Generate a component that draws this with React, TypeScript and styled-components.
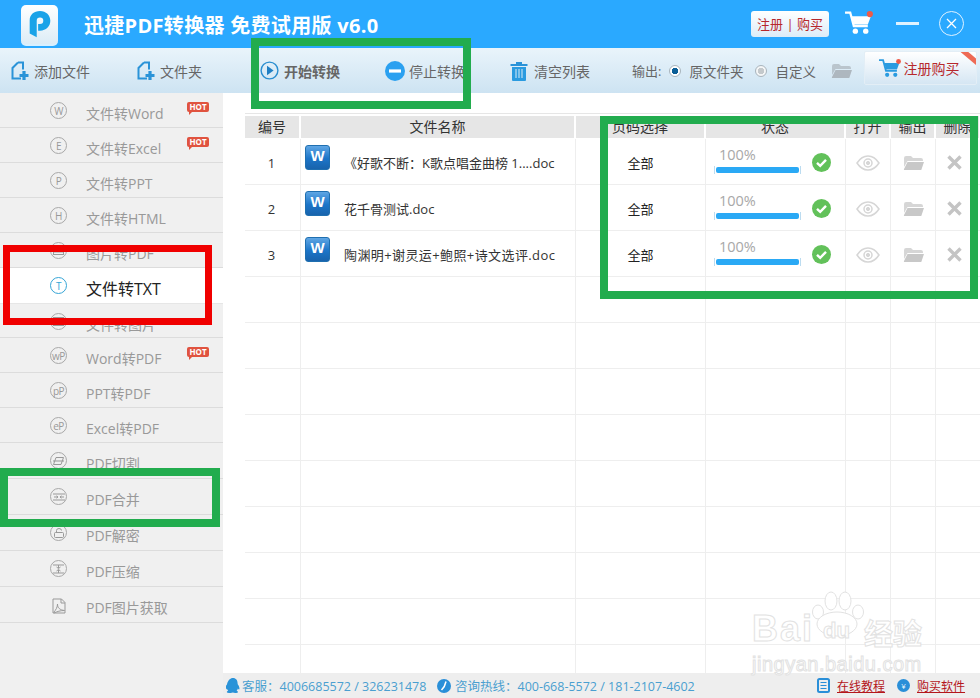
import * as React from 'react';
import styled, { createGlobalStyle } from 'styled-components';

const GlobalStyle = createGlobalStyle`
    html, body {
        margin: 0;
        padding: 0;
        background: #fff;
    }
    * {
        box-sizing: border-box;
    }
`;

const FONT = `"Open Sans", "Noto Sans CJK SC", sans-serif`;
const COLUMNS = '56px 275px 130px 140px 45px 45px 45px';

const Frame = styled.div`
    position: relative;
    width: 980px;
    height: 698px;
    overflow: hidden;
    display: flex;
    flex-direction: column;
    font-family: ${FONT};
    background: #fff;
`;

/* header */
const Header = styled.div`
    height: 48px;
    flex: none;
    background: #2aa9ff;
    display: flex;
    align-items: center;
    padding-left: 21px;
`;

const Logo = styled.div`
    width: 37px;
    height: 41px;
    margin-top: 3px;
    border-radius: 5px;
    border-bottom: 2px solid #d8f0ff;
    background: linear-gradient(#ffffff, #dcecf6);
    display: flex;
    align-items: center;
    justify-content: center;
`;

const Title = styled.div`
    margin-left: 26px;
    font-size: 20px;
    font-weight: 700;
    letter-spacing: 0.3px;
    color: #fff;
    white-space: nowrap;
    width: 667px;
`;

const RegisterLink = styled.div`
    width: 78px;
    height: 26px;
    margin-top: -1px;
    border-radius: 3px;
    background: linear-gradient(#ffffff, #dcecf8);
    color: #b7282c;
    font-size: 13px;
    display: flex;
    align-items: center;
    justify-content: center;
`;

const HeaderIcons = styled.div`
    display: flex;
    align-items: center;
    margin-top: -2px;
    margin-left: 16px;
`;

const MinLine = styled.div`
    width: 23px;
    height: 3px;
    background: #dff2ff;
    margin-left: 23px;
`;

const CloseCircle = styled.div`
    width: 25px;
    height: 25px;
    margin-left: 20px;
    border: 1.5px solid #dff2ff;
    border-radius: 50%;
    color: #fff;
    display: flex;
    align-items: center;
    justify-content: center;
`;

/* toolbar */
const Toolbar = styled.div`
    height: 45px;
    flex: none;
    padding-left: 10px;
    background: linear-gradient(#e9f4fb, #cde3f2);
    display: flex;
    align-items: center;
`;

const ToolButton = styled.div<{ $w: number; $bold?: boolean; $gap?: number }>`
    width: ${p => p.$w}px;
    flex: none;
    display: flex;
    align-items: center;
    gap: ${p => p.$gap ?? 4}px;
    font-size: 14px;
    color: #666;
    font-weight: ${p => (p.$bold ? 700 : 400)};
    white-space: nowrap;
`;

const OutputLabel = styled.span`
    font-size: 13px;
    color: #666;
    white-space: nowrap;
    margin-right: 8px;
`;

const OutputOption = styled.span<{ $w: number }>`
    width: ${p => p.$w}px;
    flex: none;
    margin-left: 8px;
    font-size: 13.5px;
    color: #666;
    white-space: nowrap;
`;

const Radio = styled.span<{ $on?: boolean }>`
    width: 12px;
    height: 12px;
    flex: none;
    border-radius: 50%;
    border: 1px solid #a9b4bc;
    background: ${p => (p.$on ? 'radial-gradient(circle, #0c5f97 0 3px, #fff 3.5px)' : 'radial-gradient(circle, #c4c9cc 0 3px, #f4f6f7 3.5px)')};
`;

const BuyButton = styled.div`
    position: relative;
    width: 113px;
    height: 34px;
    flex: none;
    margin-top: -5px;
    margin-left: 12px;
    overflow: hidden;
    border: 1px solid #e3eef6;
    border-radius: 2px;
    background: linear-gradient(#ffffff, #d5e6f3);
    color: #b7282c;
    font-size: 14px;
    display: flex;
    align-items: center;
    padding-left: 14px;
    gap: 2px;
`;

const Ribbon = styled.span`
    position: absolute;
    top: 3px;
    right: -9px;
    width: 28px;
    height: 5px;
    background: #ee6a55;
    transform: rotate(40deg);
`;

/* body */
const Body = styled.div`
    flex: 1;
    min-height: 0;
    display: flex;
`;

const Sidebar = styled.div`
    width: 223px;
    flex: none;
    background: #f0f0f0;
`;

const NavRow = styled.div<{ $h: number; $active?: boolean }>`
    position: relative;
    height: ${p => p.$h}px;
    padding-left: 50px;
    display: flex;
    align-items: flex-start;
    border-bottom: 1px solid ${p => (p.$active ? '#e6e6e6' : '#dcdcdc')};
    background: ${p => (p.$active ? '#fff' : 'transparent')};
    color: ${p => (p.$active ? '#222' : '#999')};
    font-size: ${p => (p.$active ? 16 : 14)}px;
`;

const NavIcon = styled.span<{ $active?: boolean }>`
    width: 17px;
    height: 17px;
    flex: none;
    margin-top: 9px;
    border-radius: 50%;
    border: 1px solid ${p => (p.$active ? '#36a5d6' : '#a8a8a8')};
    color: ${p => (p.$active ? '#36a5d6' : '#999')};
    font-size: 10px;
    line-height: 1;
    letter-spacing: -0.5px;
    display: flex;
    align-items: center;
    justify-content: center;
`;

const NavSquareIcon = styled.span`
    width: 17px;
    height: 17px;
    flex: none;
    margin-top: 11px;
    padding-left: 2px;
    color: #999;
    display: flex;
`;

const NavLabel = styled.span`
    margin-left: 19px;
    margin-top: 11px;
    line-height: 20px;
    white-space: nowrap;
`;

const HotBadge = styled.span`
    position: absolute;
    left: 187px;
    top: 9px;
    width: 22px;
    height: 10px;
    border-radius: 2px;
    background: #e0533f;
    color: #fff;
    font-size: 8px;
    font-weight: 700;
    line-height: 10px;
    text-align: center;
    &::after {
        content: '';
        position: absolute;
        left: 2px;
        top: 9px;
        border-top: 4px solid #e0533f;
        border-right: 4px solid transparent;
    }
`;

/* table */
const Main = styled.div`
    flex: 1;
    min-width: 0;
    display: flex;
    flex-direction: column;
`;

const TableArea = styled.div`
    flex: 1;
    min-height: 0;
    overflow: hidden;
    margin-top: 20px;
    margin-left: 22px;
    border-top: 1px solid #e6e6e6;
`;

const HeadRow = styled.div`
    height: 25px;
    padding-top: 2px;
    display: grid;
    grid-template-columns: ${COLUMNS};
`;

const HeadCell = styled.div`
    margin-right: 2px;
    height: 22px;
    background: #e6e6e6;
    color: #333;
    font-size: 14px;
    line-height: 22px;
    text-align: center;
    white-space: nowrap;
    overflow: hidden;
`;

const Row = styled.div`
    height: 46px;
    display: grid;
    grid-template-columns: ${COLUMNS};
    border-bottom: 1px solid #eeeeee;
`;

const Cell = styled.div`
    border-right: 1px solid #eeeeee;
    display: flex;
    align-items: center;
    justify-content: center;
    font-size: 13px;
    color: #333;
    min-width: 0;
`;

const NumberCell = styled(Cell)`
    padding-top: 2px;
    padding-right: 2px;
`;

const NameCell = styled(Cell)`
    justify-content: flex-start;
    padding-left: 4px;
    white-space: nowrap;
`;

const FileName = styled.span<{ $spacing?: number }>`
    margin-left: 14px;
    margin-top: 2px;
    letter-spacing: ${p => p.$spacing ?? 0}px;
    color: #333;
`;

const WordIcon = styled.span`
    width: 25px;
    height: 25px;
    flex: none;
    margin-top: -9px;
    border-radius: 3px;
    border: 1px solid #1f6fb0;
    background: linear-gradient(#5fa6e4 0, #1c75c8 55%, #1863ac);
    color: #fff;
    font-family: "Liberation Sans", sans-serif;
    font-size: 15px;
    font-weight: 700;
    line-height: 20px;
    text-align: center;
`;

const PageCell = styled(Cell)`
    padding-top: 1px;
    color: #222;
`;

const StatusCell = styled(Cell)`
    justify-content: flex-start;
    padding-left: 8px;
    padding-top: 2px;
    gap: 11px;
`;

const ProgressBox = styled.div`
    width: 87px;
    flex: none;
    margin-top: -5px;
`;

const Percent = styled.div`
    padding-left: 5px;
    font-size: 14.5px;
    line-height: 17px;
    color: #a8a8a8;
`;

const BarTrack = styled.div`
    height: 8px;
    margin-top: 3px;
    padding: 1px;
    border-left: 1px solid #bcdcf0;
    border-right: 1px solid #bcdcf0;
`;

const BarFill = styled.div`
    height: 100%;
    border-radius: 2px;
    background: #2aa9f5;
`;

const ActionCell = styled(Cell)<{ $pad?: number }>`
    padding-top: 2px;
    padding-right: ${p => p.$pad ?? 0}px;
`;

/* footer */
const Footer = styled.div`
    height: 25px;
    flex: none;
    background: #eeeeee;
    display: flex;
    align-items: center;
    padding-left: 3px;
    font-size: 12.5px;
    color: #4a9fd0;
    white-space: nowrap;
`;

const FooterText = styled.span<{ $w: number; $gap: number }>`
    width: ${p => p.$w}px;
    flex: none;
    margin-left: ${p => p.$gap}px;
`;

const FooterLink = styled.a`
    color: #b4161b;
    font-size: 12px;
    text-decoration: underline;
    margin-left: 7px;
`;

const FooterDot = styled.span`
    width: 13px;
    height: 13px;
    margin-left: 12px;
    border-radius: 50%;
    background: #2a8fd8;
    color: #fff;
    font-size: 8px;
    text-align: center;
    line-height: 13px;
`;

/* annotations drawn over the screenshot */
const Annotation = styled.div<{ $x: number; $y: number; $w: number; $h: number; $color: string; $stroke: number }>`
    position: absolute;
    left: ${p => p.$x}px;
    top: ${p => p.$y}px;
    width: ${p => p.$w}px;
    height: ${p => p.$h}px;
    border: ${p => p.$stroke}px solid ${p => p.$color};
`;

const Watermark = styled.div`
    position: absolute;
    left: 752px;
    top: 591px;
    width: 190px;
    color: #fff;
    -webkit-text-stroke: 1px #e2e2e2;
    font-family: "Liberation Sans", sans-serif;
`;

const WatermarkMain = styled.div`
    display: flex;
    align-items: flex-end;
    height: 58px;
    font-size: 36px;
    font-weight: 700;
    line-height: 40px;
    letter-spacing: 2px;
`;

const WatermarkDu = styled.span`
    position: absolute;
    left: 71px;
    top: 27px;
    font-size: 22px;
    line-height: 26px;
    letter-spacing: 0;
`;

const WatermarkCn = styled.span`
    position: absolute;
    left: 112px;
    top: 24px;
    font-family: "Noto Sans CJK SC", sans-serif;
    font-size: 29px;
    line-height: 34px;
    letter-spacing: 0;
`;

const WatermarkUrl = styled.div`
    margin-top: 4px;
    font-size: 20px;
    font-weight: 400;
    line-height: 22px;
    letter-spacing: 0.5px;
`;

const Paw = styled.svg`
    position: absolute;
    left: 60px;
    top: 0;
`;

const AddIcon = () => (
    <svg width="20" height="20" viewBox="0 0 20 20" fill="none">
        <path d="M8 1.5h5v7M11 17.5H2.5V7L8 1.5" stroke="#2a93d8" strokeWidth="2" />
        <path d="M14 10v9M9.5 14.5h9" stroke="#2a93d8" strokeWidth="3.2" />
    </svg>
);

const PlayIcon = () => (
    <svg width="19" height="19" viewBox="0 0 19 19">
        <circle cx="9.5" cy="9.5" r="8.4" fill="none" stroke="#2a8ed0" strokeWidth="1.4" />
        <path d="M7 4.8l6.6 4.7L7 14.2z" fill="#1f7fc4" />
    </svg>
);

const StopIcon = () => (
    <svg width="20" height="20" viewBox="0 0 20 20">
        <circle cx="10" cy="10" r="10" fill="#2aa0f0" />
        <rect x="4" y="8.4" width="12" height="3.2" fill="#fff" />
    </svg>
);

const TrashIcon = () => (
    <svg width="18" height="20" viewBox="0 0 18 20">
        <path d="M0.5 3h17v2H0.5zM6 1h6v2H6z" fill="#2a93d8" />
        <path d="M2 6h14v13a1 1 0 0 1-1 1H3a1 1 0 0 1-1-1z" fill="#2a9be0" />
        <path d="M6 8v9M9 8v9M12 8v9" stroke="#d8ebf6" strokeWidth="1" />
    </svg>
);

const FolderIcon = ({ color, w = 21 }: { color: string; w?: number }) => (
    <svg width={w} height={w * 0.76} viewBox="0 0 21 16">
        <path d="M1 3a2 2 0 0 1 2-2h5l2 2h8a2 2 0 0 1 2 2v1H4.5L1 12z" fill={color} opacity="0.75" />
        <path d="M4.5 7H21l-2.5 7.5a1.5 1.5 0 0 1-1.4 1H2.2a1.2 1.2 0 0 1-1.1-1.7z" fill={color} />
    </svg>
);

const CartIcon = ({ color, w }: { color: string; w: number }) => (
    <svg width={w} height={w * 0.85} viewBox="0 0 27 23">
        <path d="M0 1.5h5l3.5 13H22" fill="none" stroke={color} strokeWidth="2.2" />
        <path d="M6.5 5H25l-3 8H8.6z" fill={color} />
        <circle cx="10" cy="19.5" r="2.6" fill={color} />
        <circle cx="20" cy="19.5" r="2.6" fill={color} />
        <circle cx="24" cy="3" r="3" fill="#ee5a48" />
    </svg>
);

const EyeIcon = () => (
    <svg width="24" height="16" viewBox="0 0 24 16" fill="none" stroke="#d6d6d6">
        <path d="M1 8c3-4.6 6.6-7 11-7s8 2.4 11 7c-3 4.6-6.6 7-11 7S4 12.6 1 8z" strokeWidth="1.5" />
        <circle cx="12" cy="8" r="4" strokeWidth="1.5" />
        <circle cx="12" cy="8" r="1.6" fill="#d6d6d6" />
    </svg>
);

const CheckIcon = () => (
    <svg width="19" height="19" viewBox="0 0 19 19">
        <circle cx="9.5" cy="9.5" r="9.5" fill="#62c15a" />
        <path d="M5 9.8l3.2 3 5.8-6" fill="none" stroke="#fff" strokeWidth="2.4" />
    </svg>
);

const CrossIcon = () => (
    <svg width="15" height="15" viewBox="0 0 15 15">
        <path d="M1.5 1.5l12 12M13.5 1.5l-12 12" stroke="#c4c4c4" strokeWidth="3.4" />
    </svg>
);

const QqIcon = () => (
    <svg width="14" height="16" viewBox="0 0 14 16">
        <path d="M7 0c3 0 4.6 2.4 4.6 5.2 0 .8.2 1 .8 2 .9 1.5 1.4 3.6.8 4.2-.3.3-.9-.2-1.3-.9-.2 1-.7 1.7-1.3 2.2.8.3 1.4.8 1.4 1.3 0 .7-1.3 1-2.8 1-1 0-1.8-.2-2.3-.5-.5.3-1.3.5-2.3.5C2.1 15 .8 14.7.8 14c0-.5.6-1 1.4-1.3-.6-.5-1.1-1.2-1.3-2.2-.4.7-1 1.2-1.3.9-.6-.6-.1-2.7.8-4.2.6-1 .8-1.2.8-2C2.4 2.4 4 0 7 0z" fill="#2a93d8" />
    </svg>
);

const PhoneIcon = () => (
    <svg width="14" height="14" viewBox="0 0 14 14">
        <circle cx="7" cy="7" r="7" fill="#2a8fd8" />
        <path d="M9 2.5c-.6 3.4-2 6-4.5 8.5" fill="none" stroke="#fff" strokeWidth="1.5" />
    </svg>
);

const DocIcon = () => (
    <svg width="13" height="15" viewBox="0 0 13 15" fill="none" stroke="#2a8fd8">
        <rect x="1" y="1" width="11" height="13" rx="1.5" strokeWidth="2" />
        <path d="M3.5 4.5h6M3.5 7.5h6M3.5 10.5h6" strokeWidth="1.2" />
    </svg>
);

const ImageGlyph = () => (
    <svg width="11" height="9" viewBox="0 0 11 9" fill="none" stroke="currentColor">
        <rect x="0.5" y="0.5" width="10" height="8" />
        <path d="M0.5 6h10" />
    </svg>
);

const CropGlyph = () => (
    <svg width="11" height="8" viewBox="0 0 11 8" fill="none" stroke="currentColor">
        <path d="M3 0.5h7.5L8 7.5H0.5zM0 4h11" />
    </svg>
);

const MergeGlyph = () => (
    <svg width="12" height="8" viewBox="0 0 12 8" fill="none" stroke="currentColor">
        <path d="M0 1h12M0 7h12M1 4h3.5M7.5 4H11M3.5 2.8L5 4 3.5 5.2M8.5 2.8L7 4l1.5 1.2" />
    </svg>
);

const LockGlyph = () => (
    <svg width="10" height="10" viewBox="0 0 10 10" fill="none" stroke="currentColor">
        <rect x="0.5" y="4.5" width="9" height="5" rx="1" />
        <path d="M2.5 4.5V2.5a2.5 2 0 0 1 5 0" />
    </svg>
);

const PressGlyph = () => (
    <svg width="11" height="10" viewBox="0 0 11 10" fill="none" stroke="currentColor">
        <path d="M0 1h11M0 9h11M5.5 1v3M5.5 9V6M3.5 3L5.5 4.5 7.5 3M3.5 7L5.5 5.5 7.5 7" />
    </svg>
);

const PdfFileGlyph = () => (
    <svg width="14" height="16" viewBox="0 0 14 16" fill="none" stroke="currentColor">
        <path d="M1 1h8.5L13 4.5V15H1zM9 1v4h4" />
        <path d="M1.5 14.5C4 12 5.5 9 5.5 6c0 4 2.5 6 7 6.5-4 0-7.5 1-10.5 2.5" />
    </svg>
);

interface NavEntry {
    label: string;
    glyph: React.ReactNode;
    h: number;
    hot?: boolean;
    active?: boolean;
}

const navItems: NavEntry[] = [
    { label: '文件转Word', glyph: 'W', h: 35, hot: true },
    { label: '文件转Excel', glyph: 'E', h: 35, hot: true },
    { label: '文件转PPT', glyph: 'P', h: 35 },
    { label: '文件转HTML', glyph: 'H', h: 35 },
    { label: '图片转PDF', glyph: <ImageGlyph />, h: 35 },
    { label: '文件转TXT', glyph: 'T', h: 36, active: true },
    { label: '文件转图片', glyph: <ImageGlyph />, h: 34 },
    { label: 'Word转PDF', glyph: 'wP', h: 35, hot: true },
    { label: 'PPT转PDF', glyph: 'pP', h: 35 },
    { label: 'Excel转PDF', glyph: 'eP', h: 35 },
    { label: 'PDF切割', glyph: <CropGlyph />, h: 36 },
    { label: 'PDF合并', glyph: <MergeGlyph />, h: 36 },
    { label: 'PDF解密', glyph: <LockGlyph />, h: 36 },
    { label: 'PDF压缩', glyph: <PressGlyph />, h: 36 },
    { label: 'PDF图片获取', glyph: null, h: 36 },
];

const files = [
    { no: 1, name: '《好歌不断：K歌点唱金曲榜 1....doc' },
    { no: 2, name: '花千骨测试.doc' },
    { no: 3, name: '陶渊明+谢灵运+鲍照+诗文选评.doc', spacing: 0.4 },
];

const headers = ['编号', '文件名称', '页码选择', '状态', '打开', '输出', '删除'];

export default function App() {
    return (
        <Frame>
            <GlobalStyle />
            <Header>
                <Logo>
                    <svg width="26" height="30" viewBox="0 0 26 32">
                        <path d="M2 11C2 5 6.5 1 13 1s11 4.5 11 10.5S19.5 22 13 22h-2v-7h2a3.5 3.5 0 1 0-3.5-3.5V29L2 25z" fill="#1aa3e8" />
                    </svg>
                </Logo>
                <Title>迅捷PDF转换器 免费试用版 v6.0</Title>
                <RegisterLink>注册 | 购买</RegisterLink>
                <HeaderIcons>
                    <CartIcon color="#fff" w={28} />
                    <MinLine />
                    <CloseCircle>
                        <svg width="11" height="11" viewBox="0 0 11 11">
                            <path d="M1 1l9 9M10 1l-9 9" stroke="#fff" strokeWidth="1.3" />
                        </svg>
                    </CloseCircle>
                </HeaderIcons>
            </Header>

            <Toolbar>
                <ToolButton $w={126}><AddIcon />添加文件</ToolButton>
                <ToolButton $w={124}><AddIcon />文件夹</ToolButton>
                <ToolButton $w={125} $bold $gap={5}><PlayIcon />开始转换</ToolButton>
                <ToolButton $w={125}><StopIcon />停止转换</ToolButton>
                <ToolButton $w={122} $gap={6}><TrashIcon />清空列表</ToolButton>
                <OutputLabel>输出:</OutputLabel>
                <Radio $on />
                <OutputOption $w={66}>原文件夹</OutputOption>
                <Radio />
                <OutputOption $w={56}>自定义</OutputOption>
                <FolderIcon color="#aeb7bf" />
                <BuyButton>
                    <CartIcon color="#2a9be0" w={22} />注册购买
                    <Ribbon />
                </BuyButton>
            </Toolbar>

            <Body>
                <Sidebar>
                    {navItems.map(item => (
                        <NavRow key={item.label} $h={item.h} $active={item.active}>
                            {item.glyph ? (
                                <NavIcon $active={item.active}>{item.glyph}</NavIcon>
                            ) : (
                                <NavSquareIcon><PdfFileGlyph /></NavSquareIcon>
                            )}
                            <NavLabel>{item.label}</NavLabel>
                            {item.hot && <HotBadge>HOT</HotBadge>}
                        </NavRow>
                    ))}
                </Sidebar>

                <Main>
                    <TableArea>
                        <HeadRow>
                            {headers.map(h => <HeadCell key={h}>{h}</HeadCell>)}
                        </HeadRow>
                        {Array.from({ length: 12 }).map((_, i) => {
                            const file = files[i];
                            return (
                                <Row key={i}>
                                    <NumberCell>{file?.no}</NumberCell>
                                    <NameCell>
                                        {file && <WordIcon>W</WordIcon>}
                                        {file && <FileName $spacing={file.spacing}>{file.name}</FileName>}
                                    </NameCell>
                                    <PageCell>{file && '全部'}</PageCell>
                                    <StatusCell>
                                        {file && (
                                            <ProgressBox>
                                                <Percent>100%</Percent>
                                                <BarTrack><BarFill /></BarTrack>
                                            </ProgressBox>
                                        )}
                                        {file && <CheckIcon />}
                                    </StatusCell>
                                    <ActionCell>{file && <EyeIcon />}</ActionCell>
                                    <ActionCell>{file && <FolderIcon color="#c8c8c8" />}</ActionCell>
                                    <ActionCell $pad={7}>{file && <CrossIcon />}</ActionCell>
                                </Row>
                            );
                        })}
                    </TableArea>
                    <Footer>
                        <QqIcon />
                        <FooterText $w={195} $gap={2}>客服：4006685572 / 326231478</FooterText>
                        <PhoneIcon />
                        <FooterText $w={362} $gap={4}>咨询热线：400-668-5572 / 181-2107-4602</FooterText>
                        <DocIcon />
                        <FooterLink>在线教程</FooterLink>
                        <FooterDot>¥</FooterDot>
                        <FooterLink>购买软件</FooterLink>
                    </Footer>
                </Main>
            </Body>

            <Watermark>
                <Paw width="52" height="46" viewBox="0 0 52 46" fill="#fff" stroke="#e2e2e2">
                    <ellipse cx="19" cy="10" rx="6" ry="9" />
                    <ellipse cx="33" cy="10" rx="6" ry="9" />
                    <ellipse cx="46" cy="21" rx="5.5" ry="7" />
                    <ellipse cx="6" cy="21" rx="5.5" ry="7" />
                    <ellipse cx="25" cy="33" rx="20" ry="12" />
                </Paw>
                <WatermarkMain>
                    Bai
                    <WatermarkDu>du</WatermarkDu>
                    <WatermarkCn>经验</WatermarkCn>
                </WatermarkMain>
                <WatermarkUrl>jingyan.baidu.com</WatermarkUrl>
            </Watermark>

            <Annotation $x={251} $y={38} $w={220} $h={71} $color="#22ac4e" $stroke={8} />
            <Annotation $x={3} $y={245} $w={209} $h={80} $color="#f00000" $stroke={7} />
            <Annotation $x={0} $y={468} $w={220} $h={59} $color="#22ac4e" $stroke={8} />
            <Annotation $x={600} $y={116} $w={378} $h={183} $color="#22ac4e" $stroke={8} />
        </Frame>
    );
}
